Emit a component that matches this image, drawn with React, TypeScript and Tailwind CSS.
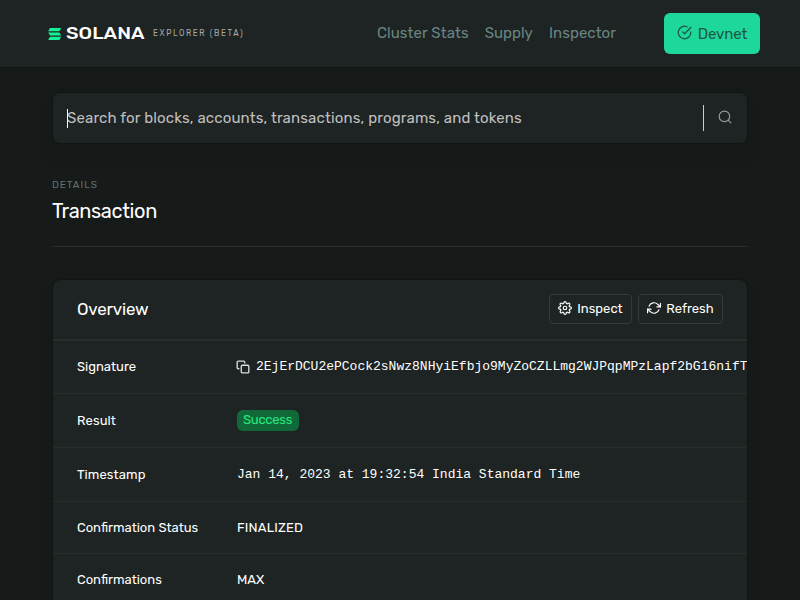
import type { ReactNode } from "react";

function Icon({ className, children }: { className: string; children: ReactNode }) {
  return (
    <svg viewBox="0 0 24 24" fill="none" stroke="currentColor" strokeWidth="2" strokeLinecap="round" strokeLinejoin="round" className={"shrink-0 " + className}>
      {children}
    </svg>
  );
}

function CheckCircle() {
  return (
    <Icon className="size-[15px] -translate-y-px">
      <path d="M22 11.08V12a10 10 0 1 1-5.93-9.14" />
      <path d="M22 4 12 14.01l-3-3" />
    </Icon>
  );
}

function Gear() {
  return (
    <Icon className="size-3.5 -translate-y-px">
      <path d="M19.4 15a1.65 1.65 0 0 0 .33 1.82l.06.06a2 2 0 1 1-2.83 2.83l-.06-.06a1.65 1.65 0 0 0-2.8 1.17V21a2 2 0 1 1-4 0v-.09a1.65 1.65 0 0 0-2.9-1.1l-.06.06a2 2 0 1 1-2.83-2.83l.06-.06A1.65 1.65 0 0 0 3.1 14H3a2 2 0 1 1 0-4h.09a1.65 1.65 0 0 0 1.1-2.9l-.06-.06a2 2 0 1 1 2.83-2.83l.06.06A1.65 1.65 0 0 0 10 3.1V3a2 2 0 1 1 4 0v.09a1.65 1.65 0 0 0 2.82 1.18l.06-.06a2 2 0 1 1 2.83 2.83l-.06.06A1.65 1.65 0 0 0 20.9 10H21a2 2 0 1 1 0 4h-.09a1.65 1.65 0 0 0-1.51 1z" />
      <circle cx="12" cy="12" r="3" />
    </Icon>
  );
}

function Refresh() {
  return (
    <Icon className="size-3.5 -translate-y-px">
      <path d="M23 4v6h-6M1 20v-6h6" />
      <path d="M3.51 9a9 9 0 0 1 14.85-3.36L23 10M1 14l4.64 4.36A9 9 0 0 0 20.49 15" />
    </Icon>
  );
}

function Copy() {
  return (
    <Icon className="-ml-px mr-px size-3.5 text-[#dddddd]">
      <rect x="9" y="9" width="13" height="13" rx="2" strokeWidth="2.3" />
      <path strokeWidth="2.3" d="M5 15H4a2 2 0 0 1-2-2V4a2 2 0 0 1 2-2h9a2 2 0 0 1 2 2v1" />
    </Icon>
  );
}

function Row({ label, height, children }: { label: ReactNode; height: string; children: ReactNode }) {
  return (
    <div className={"flex items-center border-b border-[#282d2b] pl-6 text-[13px] " + height}>
      <div className="w-40 shrink-0">{label}</div>
      <div className="flex items-center whitespace-nowrap">{children}</div>
    </div>
  );
}

export default function App() {
  return (
    <div className="h-[600px] w-[800px] overflow-hidden bg-[#161a19] font-['Rubik','Roboto',sans-serif] text-white">
      <header className="flex h-[68px] items-center border-b border-[#111414] bg-[#1e2423] pr-10 pl-12">
        <svg viewBox="0 0 14 12" className="h-3 w-3.5 shrink-0" fill="#14f195">
          <path d="M2 0h11.2l-1.8 3.2H.2zM.2 4.4h11.2l1.8 3.2H2zM2 8.8h11.2L11.4 12H.2z" />
        </svg>
        <div className="ml-1 w-[87px] shrink-0">
          <span className="inline-block origin-left scale-x-[1.22] text-[16px] leading-4 font-medium tracking-[0.05px]">SOLANA</span>
        </div>
        <span className="mt-px inline-block origin-left scale-y-[1.12] text-[8px] tracking-[1.62px] text-[#a5a8a7]">EXPLORER (BETA)</span>
        <nav className="ml-auto flex gap-4 text-[15px] text-[#698582]">
          <span className="tracking-[0.1px]">Cluster Stats</span>
          <span>Supply</span>
          <span className="tracking-[0.05px]">Inspector</span>
        </nav>
        <button className="ml-12 flex h-[41px] w-24 items-center justify-center gap-[6px] rounded-md bg-[#1dd79b] text-[15px] text-[#1d5644]">
          <CheckCircle />
          <span className="translate-y-px tracking-[-0.1px]">Devnet</span>
        </button>
      </header>

      <main className="px-[52px] pt-6">
        <div className="flex h-[52px] items-center rounded-lg border border-[#111414] bg-[#1e2423] pl-3.5 shadow-[0_12px_24px_rgba(0,0,0,0.06)]">
          <span className="h-[19px] w-px bg-white" />
          <span className="-ml-px flex-1 text-[15px] tracking-[0.14px] text-[#bfbfbf]">Search for blocks, accounts, transactions, programs, and tokens</span>
          <span className="h-[26px] w-px bg-[#cccccc]" />
          <span className="flex w-[43px] justify-center text-[#9c9c9c]">
            <Icon className="mr-px size-3.5 -translate-y-px">
              <circle cx="11" cy="11" r="9" />
              <path d="m22 22-4.6-4.6" />
            </Icon>
          </span>
        </div>

        <section className="mt-[34px] border-b border-[#282d2b] pb-[22px]">
          <p className="text-[10px] leading-[14px] tracking-[0.95px] text-[#5f726d]">DETAILS</p>
          <h1 className="mt-1.5 text-xl leading-[26px] tracking-[-0.38px]">Transaction</h1>
        </section>

        <section className="mt-8 h-[400px] overflow-hidden rounded-lg border border-[#111414] bg-[#1e2423] shadow-[0_12px_24px_rgba(0,0,0,0.06)]">
          <div className="flex h-[61px] items-center border-b-2 border-[#282d2b] px-6">
            <h2 className="flex-1 text-[17px] tracking-[-0.2px]">Overview</h2>
            <div className="-mt-0.5 flex gap-1.5 text-[13px]">
              <button className="flex h-[30px] w-[83px] items-center justify-center gap-[5px] rounded border border-[#343a37]">
                <Gear />
                <span>Inspect</span>
              </button>
              <button className="flex h-[30px] w-[85px] items-center justify-center gap-[5px] rounded border border-[#343a37]">
                <Refresh />
                <span>Refresh</span>
              </button>
            </div>
          </div>
          <Row label="Signature" height="h-[53px]">
            <Copy />
            <span className="ml-[5px] font-['Liberation_Mono']">2EjErDCU2ePCock2sNwz8NHyiEfbjo9MyZoCZLLmg2WJPqpMPzLapf2bG16nifTq</span>
          </Row>
          <Row label={<span className="tracking-[0.1px]">Result</span>} height="h-[54px]">
            <span className="h-[21px] w-[62px] rounded-md bg-[#116939] pl-1.5 leading-5 tracking-[-0.25px] text-[#26e97e]">Success</span>
          </Row>
          <Row label={<span className="tracking-[0.1px]">Timestamp</span>} height="h-[54px]">
            <span className="font-['Liberation_Mono']">Jan 14, 2023 at 19:32:54 India Standard Time</span>
          </Row>
          <Row label="Confirmation Status" height="h-[52px]"><span className="tracking-[0.2px]">FINALIZED</span></Row>
          <Row label="Confirmations" height="h-[52px]">MAX</Row>
        </section>
      </main>
    </div>
  );
}
